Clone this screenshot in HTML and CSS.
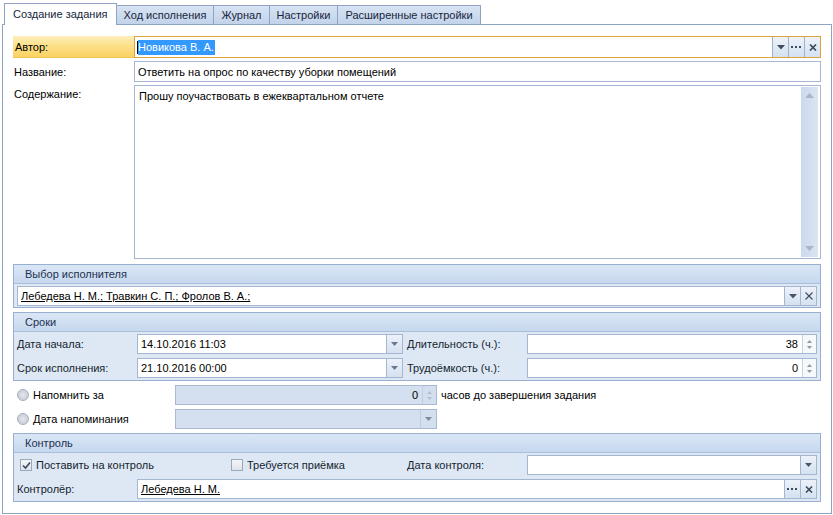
FILE: index.html
```html
<!DOCTYPE html>
<html lang="ru">
<head>
<meta charset="utf-8">
<title>Создание задания</title>
<link rel="stylesheet" href="styles.css">
</head>
<body>
<div class="tabs">
  <div class="tab active">Создание задания</div>
  <div class="tab">Ход исполнения</div>
  <div class="tab">Журнал</div>
  <div class="tab">Настройки</div>
  <div class="tab">Расширенные настройки</div>
</div>
<div class="panel">
  <div class="row row-author">
    <div class="label label-author">Автор:</div>
    <div class="inp inp-author">
      <div class="txt"><span class="caret"></span><span class="sel">Новикова В. А.</span></div>
      <div class="btn"><svg width="8" height="5" viewBox="0 0 8 5"><path d="M0 0h8L4 4.5z" fill="#3f4b5e"/></svg></div>
      <div class="btn"><svg width="11" height="3" viewBox="0 0 11 3"><rect x="0" y="0" width="2" height="2" fill="#3f4b5e"/><rect x="4" y="0" width="2" height="2" fill="#3f4b5e"/><rect x="8" y="0" width="2" height="2" fill="#3f4b5e"/></svg></div>
      <div class="btn"><svg width="8" height="7" viewBox="0 0 8 7"><path d="M1 0.5l6 6M7 0.5l-6 6" stroke="#3f4b5e" stroke-width="1.7"/></svg></div>
    </div>
  </div>
  <div class="row">
    <div class="label">Название:</div>
    <div class="inp"><div class="txt">Ответить на опрос по качеству уборки помещений</div></div>
  </div>
  <div class="row row-content">
    <div class="label label-top">Содержание:</div>
    <div class="memo">
      <div class="memo-text">Прошу поучаствовать в ежеквартальном отчете</div>
      <div class="vscroll">
        <svg width="9" height="5" viewBox="0 0 9 5"><path d="M0 5h9L4.5 0z" fill="#a9b6c8"/></svg>
        <svg width="9" height="5" viewBox="0 0 9 5"><path d="M0 0h9L4.5 5z" fill="#a9b6c8"/></svg>
      </div>
    </div>
  </div>

  <div class="group">
    <div class="group-head">Выбор исполнителя</div>
    <div class="group-body body-single">
      <div class="inp">
        <div class="txt"><span class="link">Лебедева Н. М.; Травкин С. П.; Фролов В. А.; </span></div>
        <div class="btn"><svg width="8" height="5" viewBox="0 0 8 5"><path d="M0 0h8L4 4.5z" fill="#4a5568"/></svg></div>
        <div class="btn"><svg width="8" height="8" viewBox="0 0 8 8"><path d="M0.5 0.5l7 7M7.5 0.5l-7 7" stroke="#3f4b5e" stroke-width="1.1"/></svg></div>
      </div>
    </div>
  </div>

  <div class="group">
    <div class="group-head">Сроки</div>
    <div class="group-body">
      <div class="frow">
        <div class="flabel">Дата начала:</div>
        <div class="inp w-date">
          <div class="txt">14.10.2016 11:03</div>
          <div class="btn"><svg width="7" height="4" viewBox="0 0 7 4"><path d="M0 0h7L3.5 4z" fill="#6b778a"/></svg></div>
        </div>
        <div class="flabel flabel-2">Длительность (ч.):</div>
        <div class="inp w-num">
          <div class="txt num">38</div>
          <div class="spin"><svg width="5" height="3" viewBox="0 0 5 3"><path d="M0 3h5L2.5 0z" fill="#8c97a8"/></svg><svg width="5" height="3" viewBox="0 0 5 3"><path d="M0 0h5L2.5 3z" fill="#8c97a8"/></svg></div>
        </div>
      </div>
      <div class="frow">
        <div class="flabel">Срок исполнения:</div>
        <div class="inp w-date">
          <div class="txt">21.10.2016 00:00</div>
          <div class="btn"><svg width="7" height="4" viewBox="0 0 7 4"><path d="M0 0h7L3.5 4z" fill="#6b778a"/></svg></div>
        </div>
        <div class="flabel flabel-2">Трудоёмкость (ч.):</div>
        <div class="inp w-num">
          <div class="txt num">0</div>
          <div class="spin"><svg width="5" height="3" viewBox="0 0 5 3"><path d="M0 3h5L2.5 0z" fill="#8c97a8"/></svg><svg width="5" height="3" viewBox="0 0 5 3"><path d="M0 0h5L2.5 3z" fill="#8c97a8"/></svg></div>
        </div>
      </div>
    </div>
  </div>

  <div class="opts">
    <div class="opt-row">
      <div class="opt-label"><span class="radio"></span>Напомнить за</div>
      <div class="inp inp-dis w-remind">
        <div class="txt num">0</div>
        <div class="spin spin-dis"><svg width="5" height="3" viewBox="0 0 5 3"><path d="M0 3h5L2.5 0z" fill="#b3bdcb"/></svg><svg width="5" height="3" viewBox="0 0 5 3"><path d="M0 0h5L2.5 3z" fill="#b3bdcb"/></svg></div>
      </div>
      <div class="opt-after">часов до завершения задания</div>
    </div>
    <div class="opt-row">
      <div class="opt-label"><span class="radio"></span>Дата напоминания</div>
      <div class="inp inp-dis w-remind">
        <div class="txt"></div>
        <div class="btn btn-dis"><svg width="7" height="4" viewBox="0 0 7 4"><path d="M0 0h7L3.5 4z" fill="#7f8a9b"/></svg></div>
      </div>
    </div>
  </div>

  <div class="group">
    <div class="group-head">Контроль</div>
    <div class="group-body">
      <div class="frow">
        <div class="chk-cell c1"><span class="chk"><svg width="9" height="9" viewBox="0 0 9 9"><path d="M1 4.5l2.5 2.5L8 1.5" stroke="#3d4a5e" stroke-width="1.6" fill="none"/></svg></span>Поставить на контроль</div>
        <div class="chk-cell c2"><span class="chk"></span>Требуется приёмка</div>
        <div class="flabel">Дата контроля:</div>
        <div class="inp w-num">
          <div class="txt"></div>
          <div class="btn"><svg width="7" height="4" viewBox="0 0 7 4"><path d="M0 0h7L3.5 4z" fill="#4a5568"/></svg></div>
        </div>
      </div>
      <div class="frow">
        <div class="flabel">Контролёр:</div>
        <div class="inp w-ctrl">
          <div class="txt"><span class="link">Лебедева Н. М.</span></div>
          <div class="btn"><svg width="11" height="2" viewBox="0 0 11 2"><rect x="0" y="0" width="2" height="2" fill="#3f4b5e"/><rect x="4" y="0" width="2" height="2" fill="#3f4b5e"/><rect x="8" y="0" width="2" height="2" fill="#3f4b5e"/></svg></div>
          <div class="btn"><svg width="8" height="7" viewBox="0 0 8 7"><path d="M1 0.5l6 6M7 0.5l-6 6" stroke="#3f4b5e" stroke-width="1.6"/></svg></div>
        </div>
      </div>
    </div>
  </div>
</div>
</body>
</html>
```

FILE: styles.css
```css
* { box-sizing: border-box; }

body {
  margin: 0;
  width: 833px;
  height: 515px;
  overflow: hidden;
  background: #ffffff;
  font-family: "Liberation Sans", Arial, sans-serif;
  font-size: 11px;
  color: #000;
}

/* ---- tabs ---- */
.tabs {
  display: flex;
  align-items: flex-end;
  height: 24px;
  padding-left: 4px;
}

.tab {
  height: 19px;
  padding: 0 7px;
  display: flex;
  align-items: center;
  border: 1px solid #8fa4c4;
  border-bottom: none;
  margin-right: -1px;
  background: linear-gradient(#d7e3f3, #c2d3ea);
  color: #17263c;
  white-space: nowrap;
}

.tab.active {
  height: 22px;
  margin-bottom: -1px;
  padding: 0 8px 1px;
  background: #fff;
  position: relative;
  z-index: 1;
}

/* ---- panel ---- */
.panel {
  margin-left: 2px;
  width: 830px;
  height: 490px;
  border: 1px solid #8ea4c4;
  padding: 11px 10px 0 10px;
  background: #fff;
}

.row {
  display: flex;
  height: 21px;
  margin-bottom: 3px;
}

.row-author { height: 22px; }
.row-content { height: 174px; margin-bottom: 5px; }

.label {
  width: 121px;
  flex: none;
  display: flex;
  align-items: center;
  padding-left: 1px;
}

.label-top { align-items: flex-start; padding-top: 3px; }

.label-author {
  padding-left: 2px;
  background: linear-gradient(#fdf0bd 0%, #fde08a 45%, #fbd262 100%);
  border-bottom: 1px solid #f1c45a;
}

/* ---- inputs ---- */
.inp {
  flex: 1;
  display: flex;
  height: 20px;
  border: 1px solid #a4b6d0;
  background: #fff;
}

.row .inp { height: auto; }

.group-body > .inp { flex: none; }

.inp-author { border-color: #dba43f; }

.txt {
  flex: 1;
  min-width: 0;
  display: flex;
  align-items: center;
  padding: 0 3px;
  white-space: nowrap;
  overflow: hidden;
}

.txt.num { justify-content: flex-end; padding-right: 4px; }

.inp-author .txt { padding-left: 2px; }

.caret {
  display: inline-block;
  width: 1px;
  height: 13px;
  background: #000;
}

.sel {
  background: #3399ff;
  color: #fff;
  padding: 1px 1px 1px 0;
  line-height: 13px;
}

.link { text-decoration: underline; }

.btn {
  width: 16px;
  flex: none;
  display: flex;
  align-items: center;
  justify-content: center;
  border-left: 1px solid #a4b6d0;
  background: linear-gradient(#edf2fa, #d5e1f1);
}

.inp-author .btn { border-left-color: #9fb0ca; }

.spin {
  width: 14px;
  flex: none;
  display: flex;
  flex-direction: column;
  align-items: center;
  justify-content: center;
  gap: 3px;
  border-left: 1px solid #c7d3e3;
  background: #f6f9fc;
}

.spin-dis { background: #d3dfee; border-left-color: #bfcde0; }

.btn-dis { background: #d3dfee; border-left-color: #bfcde0; }

.inp-dis {
  background: #d4e0ef;
  border-color: #a9bbd3;
}

/* ---- memo ---- */
.memo {
  flex: 1;
  display: flex;
  border: 1px solid #a4b6d0;
  background: #fff;
  padding: 1px;
}

.memo-text {
  flex: 1;
  padding: 3px 3px;
}

.vscroll {
  width: 17px;
  margin-right: 1px;
  display: flex;
  flex-direction: column;
  align-items: center;
  justify-content: space-between;
  padding: 6px 0 6px;
  background: linear-gradient(90deg, #cbd9ec, #dbe5f2);
}

/* ---- groups ---- */
.group {
  border: 1px solid #99afcf;
  background: #dee8f5;
  margin-bottom: 4px;
}

.group-head {
  height: 19px;
  display: flex;
  align-items: center;
  padding-left: 11px;
  border-bottom: 1px solid #aabdd9;
  background: linear-gradient(#dae6f5, #c6d8ef);
  color: #1d3150;
}

.group-body {
  padding: 2px 3px 2px;
  display: flex;
  flex-direction: column;
  gap: 4px;
}

.body-single { padding-bottom: 1px; }

.frow {
  display: flex;
  height: 20px;
  align-items: stretch;
}

.flabel {
  width: 120px;
  flex: none;
  display: flex;
  align-items: center;
  color: #141e2d;
}

.flabel-2 { width: 124px; padding-left: 4px; }

.w-date { flex: none; width: 266px; }
.w-num { flex: none; width: 290px; }
.w-ctrl { flex: none; width: 680px; }

/* ---- options (radio) ---- */
.opts {
  display: flex;
  flex-direction: column;
  gap: 4px;
  margin: 4px 0 4px;
}

.opt-row {
  display: flex;
  height: 20px;
  align-items: stretch;
}

.opt-label {
  width: 162px;
  flex: none;
  display: flex;
  align-items: center;
  padding-left: 4px;
}

.radio {
  width: 12px;
  height: 12px;
  border-radius: 50%;
  border: 1px solid #a3aebd;
  background: radial-gradient(circle at 50% 50%, #e7e9ec 0%, #cdd2d9 60%, #f0f2f4 100%);
  margin-right: 4px;
  flex: none;
}

.w-remind { flex: none; width: 262px; }

.opt-after {
  display: flex;
  align-items: center;
  padding-left: 4px;
}

/* ---- checkboxes ---- */
.chk-cell {
  display: flex;
  align-items: center;
  flex: none;
  color: #141e2d;
}

.c1 { width: 214px; padding-left: 3px; }
.c2 { width: 176px; }

.chk {
  width: 12px;
  height: 12px;
  border: 1px solid #9aa8bb;
  background: linear-gradient(#f3f5f8, #dfe4ea);
  margin-right: 4px;
  display: flex;
  align-items: center;
  justify-content: center;
  flex: none;
}
```
